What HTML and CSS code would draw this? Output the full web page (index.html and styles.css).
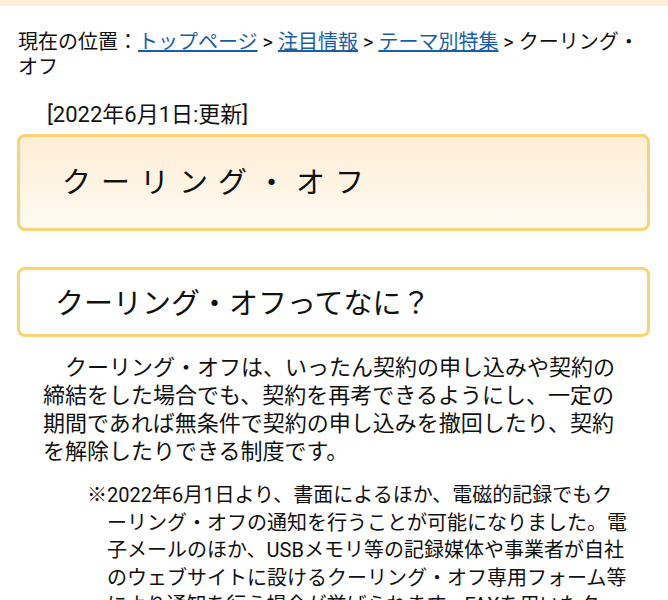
FILE: index.html
```html
<!DOCTYPE html>
<html lang="ja">
<head>
  <title>クーリング・オフ</title>
  <meta charset="UTF-8" />
  <meta name="viewport" content="width=device-width, initial-scale=1.0" />
  <link rel="stylesheet" href="styles.css">
</head>
<body>

  <div class="top-bar"></div>

  <div class="breadcrumb">
    現在の位置：<a href="#">トップページ</a> &gt; <a href="#">注目情報</a> &gt; <a href="#">テーマ別特集</a> &gt; クーリング・オフ
  </div>

  <p class="update-date">[2022年6月1日:更新]</p>

  <h1 class="page-title">クーリング・オフ</h1>

  <h2 class="section-title">クーリング・オフってなに？</h2>

  <p class="lead">クーリング・オフは、いったん契約の申し込みや契約の締結をした場合でも、契約を再考できるようにし、一定の期間であれば無条件で契約の申し込みを撤回したり、契約を解除したりできる制度です。</p>

  <p class="note">※2022年6月1日より、書面によるほか、電磁的記録でもクーリング・オフの通知を行うことが可能になりました。電子メールのほか、USBメモリ等の記録媒体や事業者が自社のウェブサイトに設けるクーリング・オフ専用フォーム等により通知を行う場合が挙げられます。FAXを用いたクーリング・オフも可能です。</p>

</body>
</html>
```

FILE: styles.css
```css
body {
  margin: 0;
  background-color: #fff;
  color: #111;
  font-family: Roboto, "Noto Sans CJK JP", sans-serif;
}

.top-bar {
  height: 6px;
  background-color: #fdefd8;
}

.breadcrumb {
  margin: 24px 18px 0;
  font-size: 20px;
  line-height: 25px;
}
.breadcrumb a {
  color: #1b5ea7;
  text-decoration: underline;
}

.update-date {
  margin: 22px 0 0 47px;
  font-size: 22px;
  line-height: 26px;
}

/* framed headings */
.page-title,
.section-title {
  box-sizing: border-box;
  display: flex;
  align-items: center;
  margin: 0 18px 0 17px;
  border: 3px solid #fbd274;
  border-radius: 8px;
  font-size: 29px;
  font-weight: normal;
}

.page-title {
  margin-top: 6px;
  height: 97px;
  padding: 0 0 5px 42px;
  letter-spacing: 10px;
  background: linear-gradient(#fdeed5, #fffaf2);
}

.section-title {
  margin-top: 36px;
  height: 70px;
  padding: 0 0 2px 35px;
  background-color: #fff;
}

.lead {
  margin: 17px 43px 0;
  font-size: 22px;
  line-height: 28px;
  text-indent: 1em;
}

.note {
  margin: 16px 36px 0 0;
  padding-left: 107px;
  text-indent: -20px;
  font-size: 20px;
  line-height: 27.5px;
}
```
